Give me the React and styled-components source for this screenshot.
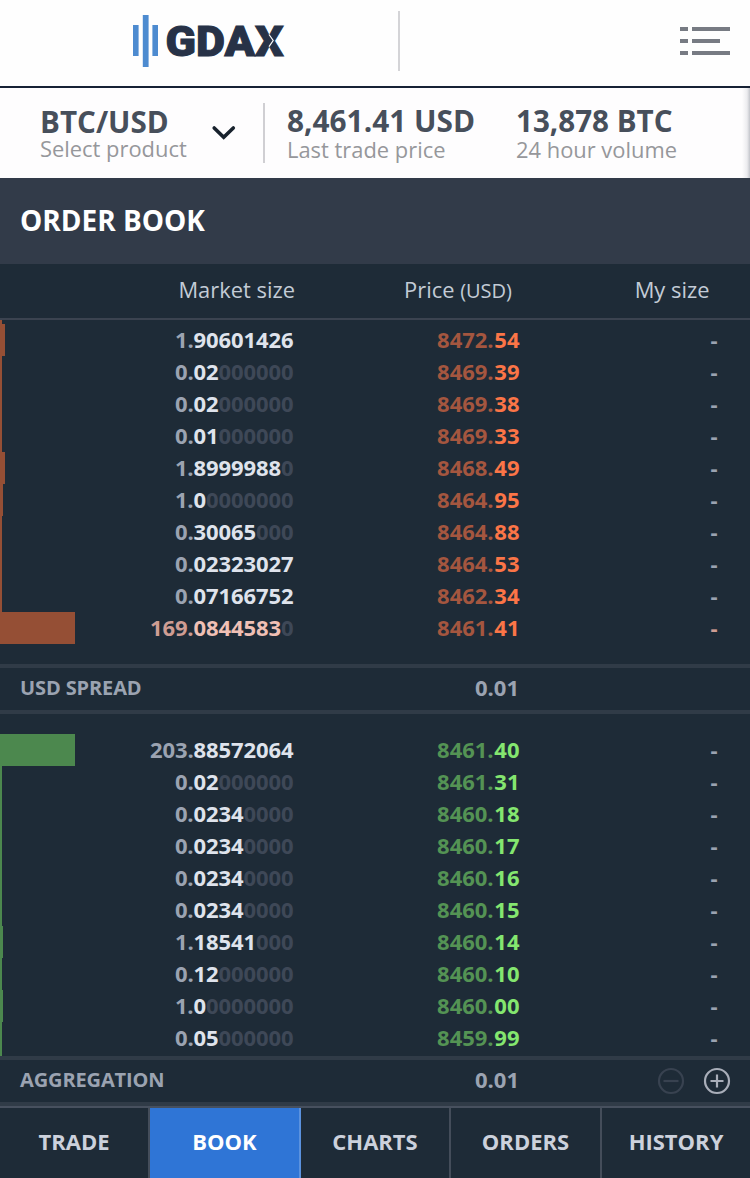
import React from "react";
import styled, { createGlobalStyle, ThemeProvider } from "styled-components";

const theme = {
  colors: {
    background: "#1e2b37",
    panel: "#323b49",
    line: "#303b47",
    muted: "#9ba3b1",
    light: "#dfe3ec",
    faint: "#3e4857",
    flash: "#f0c0b5",
    flashDark: "#cf9d93",
    sell: "#fb7547",
    sellDark: "#a4563f",
    sellBar: "#954f35",
    buy: "#84e66f",
    buyDark: "#549354",
    buyBar: "#4c884e",
    primary: "#2f75d6",
  },
};

const GlobalStyle = createGlobalStyle`
* {
  box-sizing: border-box;
}
body {
  margin: 0;
  font-family: "Open Sans", "Noto Sans", sans-serif;
  background-color: #1e2b37;
}
`;

const Page = styled.div`
  width: 750px;
  height: 1178px;
  display: flex;
  flex-direction: column;
  overflow: hidden;
  background-color: ${({ theme }) => theme.colors.background};
`;

const Header = styled.header`
  display: flex;
  align-items: flex-start;
  height: 88px;
  flex: none;
  background-color: #fefefe;
  border-bottom: 2px solid #172235;
`;

const Logo = styled.svg`
  display: block;
  margin-left: 128px;
`;

const HeaderDivider = styled.div`
  width: 2px;
  height: 60px;
  margin: 11px 0 0 90px;
  background-color: #d4d4d7;
`;

const MenuIcon = styled.svg`
  display: block;
  margin: 27px 20px 0 auto;
`;

const Ticker = styled.section`
  display: flex;
  height: 90px;
  flex: none;
  padding-left: 40px;
  background: linear-gradient(to left, #c3c5cb 0, #ececef 3px, #fefdfe 8px);
`;

const Stat = styled.div`
  width: ${({ $width }) => $width}px;
  padding-top: ${({ $top }) => $top || 18}px;
  white-space: nowrap;
`;

const StatValue = styled.div`
  font-size: ${({ $size }) => $size || 29.8}px;
  line-height: 30px;
  font-weight: 700;
  color: #474f5b;
`;

const StatLabel = styled.div`
  font-size: 21.9px;
  line-height: 26px;
  margin-top: ${({ $top }) => $top || 1}px;
  color: #96979b;
`;

const Chevron = styled.svg`
  display: block;
  margin: 36px 26px 0 0;
`;

const TickerDivider = styled.div`
  width: 2px;
  height: 60px;
  margin: 15px 22px 0 0;
  background-color: #d0cfd3;
`;

const Title = styled.h1`
  height: 86px;
  flex: none;
  margin: 0;
  padding-left: 20px;
  font-size: 28px;
  line-height: 85px;
  font-weight: 700;
  color: #fff;
  background-color: ${({ theme }) => theme.colors.panel};
`;

const ColumnHeads = styled.div`
  display: grid;
  grid-template-columns: 295px 217px 197.5px;
  height: 56px;
  flex: none;
  border-bottom: 2px solid #3b4350;
`;

const ColumnHead = styled.div`
  font-size: 21.9px;
  line-height: 52px;
  text-align: right;
  color: #c3cbd6;
  small {
    font-size: 20px;
  }
`;

const Orders = styled.div`
  flex: none;
  padding: ${({ $side }) => ($side === "sell" ? "4px 0 20px" : "20px 0 2px")};
  background: linear-gradient(
      ${({ theme, $side }) => theme.colors[$side + "Bar"]},
      ${({ theme, $side }) => theme.colors[$side + "Bar"]}
    )
    0 ${({ $side }) => ($side === "sell" ? "0" : "20px")} / 2px
    ${({ $side }) => ($side === "sell" ? "324px" : "322px")} no-repeat;
`;

const Row = styled.div`
  display: grid;
  grid-template-columns: 75px 218.5px 226px 198px;
  height: 32px;
  font-size: 22px;
  line-height: 30px;
  font-weight: 700;
  text-align: right;
`;

const Bar = styled.div`
  height: 32px;
  background-color: ${({ theme, $side }) => theme.colors[$side + "Bar"]};
`;

const Size = styled.div`
  letter-spacing: -0.09px;
  color: ${({ theme, $flash }) => ($flash ? theme.colors.flash : theme.colors.light)};
`;

const Whole = styled.span`
  color: ${({ theme, $flash }) => ($flash ? theme.colors.flashDark : theme.colors.muted)};
`;

const Zeros = styled.span`
  color: ${({ theme }) => theme.colors.faint};
`;

const Price = styled.div`
  color: ${({ theme, $side }) => theme.colors[$side]};
  span {
    margin-right: 0.7px;
    color: ${({ theme, $side }) => theme.colors[$side + "Dark"]};
  }
`;

const MySize = styled.div`
  color: ${({ theme, $flash }) => ($flash ? theme.colors.flashDark : theme.colors.muted)};
`;

const InfoRow = styled.div`
  display: grid;
  grid-template-columns: 300px 199px 1fr;
  height: 50px;
  flex: none;
  padding-left: 20px;
  font-size: 20px;
  line-height: 40px;
  font-weight: 700;
  letter-spacing: -0.12px;
  color: ${({ theme }) => theme.colors.muted};
  border-top: 4px solid ${({ theme }) => theme.colors.line};
  border-bottom: 4px solid ${({ theme }) => theme.colors.line};
`;

const InfoValue = styled.div`
  font-size: 22px;
  line-height: 38px;
  letter-spacing: 0;
  text-align: right;
`;

const Controls = styled.div`
  display: flex;
  justify-content: flex-end;
  align-items: center;
  gap: 18px;
  padding-right: 19px;
`;

const Tabs = styled.nav`
  display: grid;
  grid-template-columns: 150px 151px 150px 151px 1fr;
  flex: 1;
  border-top: 2px solid #47505e;
`;

const Tab = styled.div`
  font-size: 22px;
  line-height: 66px;
  font-weight: 700;
  text-align: center;
  color: ${({ $active }) => ($active ? "#fff" : "#ccd1dc")};
  background-color: ${({ theme, $active }) => ($active ? theme.colors.primary : "transparent")};
  border-right: 2px solid ${({ $active }) => ($active ? "#5b92de" : "#444d5a")};
  &:last-child {
    border-right: 0;
  }
`;

const sells = [
  ["1.", "90601426", "", "8472.", "54", 4.6],
  ["0.", "02", "000000", "8469.", "39", 2],
  ["0.", "02", "000000", "8469.", "38", 2],
  ["0.", "01", "000000", "8469.", "33", 2],
  ["1.", "8999988", "0", "8468.", "49", 4.6],
  ["1.", "0", "0000000", "8464.", "95", 2.6],
  ["0.", "30065", "000", "8464.", "88", 2],
  ["0.", "02323027", "", "8464.", "53", 2],
  ["0.", "07166752", "", "8462.", "34", 2],
  ["169.", "0844583", "0", "8461.", "41", 75, true],
];

const buys = [
  ["203.", "88572064", "", "8461.", "40", 75],
  ["0.", "02", "000000", "8461.", "31", 2],
  ["0.", "0234", "0000", "8460.", "18", 2],
  ["0.", "0234", "0000", "8460.", "17", 2],
  ["0.", "0234", "0000", "8460.", "16", 2],
  ["0.", "0234", "0000", "8460.", "15", 2],
  ["1.", "18541", "000", "8460.", "14", 2.8],
  ["0.", "12", "000000", "8460.", "10", 2],
  ["1.", "0", "0000000", "8460.", "00", 2.6],
  ["0.", "05", "000000", "8459.", "99", 2],
];

const tabs = ["TRADE", "BOOK", "CHARTS", "ORDERS", "HISTORY"];

const OrderList = ({ side, orders }) => (
  <Orders $side={side}>
    {orders.map(([whole, decimals, zeros, price, cents, bar, flash]) => (
      <Row key={price + cents}>
        <Bar $side={side} style={{ width: bar }} />
        <Size $flash={flash}>
          <Whole $flash={flash}>{whole}</Whole>
          {decimals}
          <Zeros>{zeros}</Zeros>
        </Size>
        <Price $side={side}>
          <span>{price}</span>
          {cents}
        </Price>
        <MySize $flash={flash}>-</MySize>
      </Row>
    ))}
  </Orders>
);

const GdaxLogo = () => (
  <Logo width="180" height="80" viewBox="128 0 180 80">
    <path fill="#4d8bd0" d="M133 25h5.6v31H133zM142.8 15h5.8v52h-5.8zM152.4 25h5.6v31h-5.6z" />
    <text
      x="165.5"
      y="55.5"
      textLength="118"
      lengthAdjust="spacingAndGlyphs"
      fontFamily="Roboto"
      fontWeight="900"
      fontSize="42"
      fill="#273247"
      stroke="#273247"
      strokeWidth="1"
    >
      GDAX
    </text>
    <path d="M269 34.5l4.2 6-4.2 6.2" fill="none" stroke="#fefefe" strokeWidth="1.2" />
  </Logo>
);

const App = () => {
  return (
    <ThemeProvider theme={theme}>
      <GlobalStyle />
      <Page>
        <Header>
          <GdaxLogo />
          <HeaderDivider />
          <MenuIcon width="50" height="28" viewBox="0 0 50 28">
            <path fill="#777b83" d="M0 0h8v4H0zM12 0h38v4H12zM0 12h8v4H0zM12 12h28v4H12zM0 24h8v4H0zM12 24h38v4H12z" />
          </MenuIcon>
        </Header>
        <Ticker>
          <Stat $width={171} $top={19}>
            <StatValue $size={29.6}>BTC/USD</StatValue>
            <StatLabel $top={-1}>Select product</StatLabel>
          </Stat>
          <Chevron width="26" height="18" viewBox="0 0 26 18">
            <path d="M3.2 4l9.5 9.3L22.3 4" fill="none" stroke="#18222d" strokeWidth="3.6" strokeLinecap="round" />
          </Chevron>
          <TickerDivider />
          <Stat $width={229}>
            <StatValue>8,461.41 USD</StatValue>
            <StatLabel>Last trade price</StatLabel>
          </Stat>
          <Stat $width={180}>
            <StatValue $size={29.6}>13,878 BTC</StatValue>
            <StatLabel>24 hour volume</StatLabel>
          </Stat>
        </Ticker>
        <Title>ORDER BOOK</Title>
        <ColumnHeads>
          <ColumnHead>Market size</ColumnHead>
          <ColumnHead>
            Price <small>(USD)</small>
          </ColumnHead>
          <ColumnHead>My size</ColumnHead>
        </ColumnHeads>
        <OrderList side="sell" orders={sells} />
        <InfoRow>
          USD SPREAD
          <InfoValue>0.01</InfoValue>
        </InfoRow>
        <OrderList side="buy" orders={buys} />
        <InfoRow>
          AGGREGATION
          <InfoValue>0.01</InfoValue>
          <Controls>
            <svg width="28" height="28" viewBox="0 0 28 28" fill="none" stroke="#384250" strokeWidth="2.2">
              <circle cx="14" cy="14" r="12" />
              <path d="M6.5 14h15" />
            </svg>
            <svg width="28" height="28" viewBox="0 0 28 28" fill="none" stroke="#a9aeb9" strokeWidth="2.2">
              <circle cx="14" cy="14" r="12" />
              <path d="M7.5 14h13M14 7.5v13" />
            </svg>
          </Controls>
        </InfoRow>
        <Tabs>
          {tabs.map((tab) => (
            <Tab key={tab} $active={tab === "BOOK"}>
              {tab}
            </Tab>
          ))}
        </Tabs>
      </Page>
    </ThemeProvider>
  );
};

export default App;
